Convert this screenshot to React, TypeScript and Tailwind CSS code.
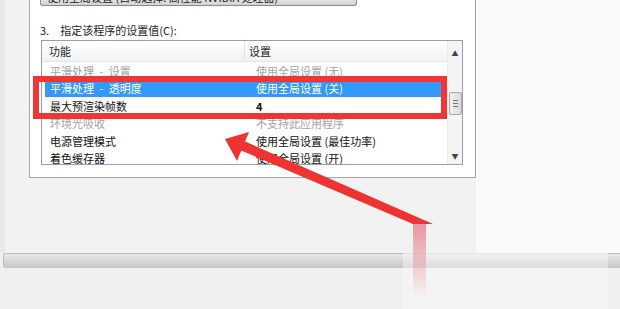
import React from 'react';

const rows = [
  { name: '平滑处理\u2002-\u2002设置', value: '使用全局设置 (无)', dim: true },
  { name: '平滑处理\u2002-\u2002透明度', value: '使用全局设置 (关)', selected: true },
  { name: '最大预渲染帧数', value: '4', bold: true },
  { name: '环境光吸收', value: '不支持此应用程序', dim: true },
  { name: '电源管理模式', value: '使用全局设置 (最佳功率)' },
  { name: '着色缓存器', value: '使用全局设置 (开)' },
];

function ScrollBar() {
  return (
    <div className="flex flex-col items-center w-[15px] bg-[#f4f4f4] border-l border-[#ececec]">
      <span className="h-[18px] mt-[3px] text-[7px] leading-[18px] text-[#444]">▲</span>
      <div className="flex-1 w-full flex flex-col items-center">
        <div className="mt-[30px] w-[13px] h-[23px] rounded-[2px] border border-[#a9a9a9] bg-gradient-to-r from-[#f2f2f2] to-[#dadada] flex flex-col items-center justify-center gap-[2px]">
          <span className="w-[5px] h-px bg-[#777]" />
          <span className="w-[5px] h-px bg-[#777]" />
          <span className="w-[5px] h-px bg-[#777]" />
        </div>
      </div>
      <span className="h-[14px] mb-[1px] text-[7px] leading-[14px] text-[#444]">▼</span>
    </div>
  );
}

function SettingsList() {
  return (
    <div className="ml-[11px] mt-[3px] w-[422px] h-[125px] border border-[#9a9ea6] bg-white flex overflow-hidden">
      <div className="flex-1 flex flex-col">
        <div className="h-[21px] flex items-center bg-gradient-to-b from-[#ffffff] to-[#f1f2f4] border-b border-[#e6e6e6] text-[11px] text-[#1e1e1e] shrink-0">
          <div className="w-[203px] pl-[7px] h-full flex items-center border-r border-[#e2e3e5]">功能</div>
          <div className="pl-[4px]">设置</div>
        </div>
        <div className="flex flex-col pl-[3px]">
          {rows.map((r) => (
            <div
              key={r.name}
              className={
                'h-[17.5px] flex items-center text-[11px] shrink-0 ' +
                (r.selected ? 'bg-[#3399ff] text-white' : r.dim ? 'text-[#a3a3a3]' : 'text-[#111]')
              }
            >
              <div className="w-[200px] pl-[5px] whitespace-nowrap">{r.name}</div>
              <div className={'pl-[11px] whitespace-nowrap ' + (r.bold ? 'font-bold' : '')}>{r.value}</div>
            </div>
          ))}
        </div>
      </div>
      <ScrollBar />
    </div>
  );
}

export default function App() {
  return (
    <div className="relative w-[620px] h-[309px] overflow-hidden bg-[#f0f0f0] flex flex-col font-['Noto_Sans_CJK_SC','Noto_Sans',sans-serif]">
      <div className="h-[253px] flex shrink-0">
        <div className="w-[5px] bg-[#e9e9e9]" />
        <div className="flex-1 flex bg-[#f2f2f2]">
          <div className="ml-[24px] w-[447px] h-[178px] bg-white border-x border-b border-[#a5a5a5] flex flex-col">
            {/* bottom edge of the button above, cut by the window */}
            <div className="ml-[10px] w-[317px] h-[6px] shrink-0 rounded-b-[3px] border-x border-b border-[#8a8a8a] bg-gradient-to-b from-[#e2e2e2] to-[#d2d2d2] overflow-hidden">
              <div className="mt-[-10px] pl-[6px] text-[11px] leading-[14px] text-[#222] whitespace-nowrap">
                使用全局设置 (自动选择: 高性能 NVIDIA 处理器)
              </div>
            </div>
            <div className="ml-[10px] mt-[17px] text-[11px] leading-[14px] text-[#1e1e1e] whitespace-nowrap">
              3.{'\u2002\u2002'}指定该程序的设置值(C):
            </div>
            <SettingsList />
          </div>
          <div className="flex-1 bg-[#fafafa]" />
        </div>
      </div>
      <div className="h-[15px] flex shrink-0">
        <div className="ml-[3px] w-[400px] rounded-l-[3px] border-t border-l border-[#bcbcbc] bg-gradient-to-b from-[#e9e9e9] to-[#c6c6c6]" />
        <div className="w-[205px] border-t border-[#e4e4e4] bg-gradient-to-b from-[#f0f0f0] to-[#dcdcdc]" />
        <div className="flex-1 border-t border-[#bcbcbc] bg-gradient-to-b from-[#e9e9e9] to-[#c6c6c6]" />
      </div>
      <div className="flex-1 flex">
        <div className="w-[403px]" />
        <div className="w-[205px] bg-[#f4f4f4]" />
      </div>

      {/* red highlight box */}
      <div className="absolute left-[33px] top-[76px] w-[414px] h-[43px] border-[6px] border-[#ef3535]" />

      {/* faded marker */}
      <div className="absolute left-[413px] top-[224px] w-[13px] h-[74px] bg-gradient-to-b from-[#e4707c] to-transparent opacity-70" />

      {/* arrow */}
      <svg className="absolute left-0 top-0" width="620" height="309" viewBox="0 0 620 309">
        <polygon points="433,224 413,224 240,150 244,141" fill="#ef3232" />
        <polygon points="225,139 249,132 237,161" fill="#ef3232" />
      </svg>
    </div>
  );
}
